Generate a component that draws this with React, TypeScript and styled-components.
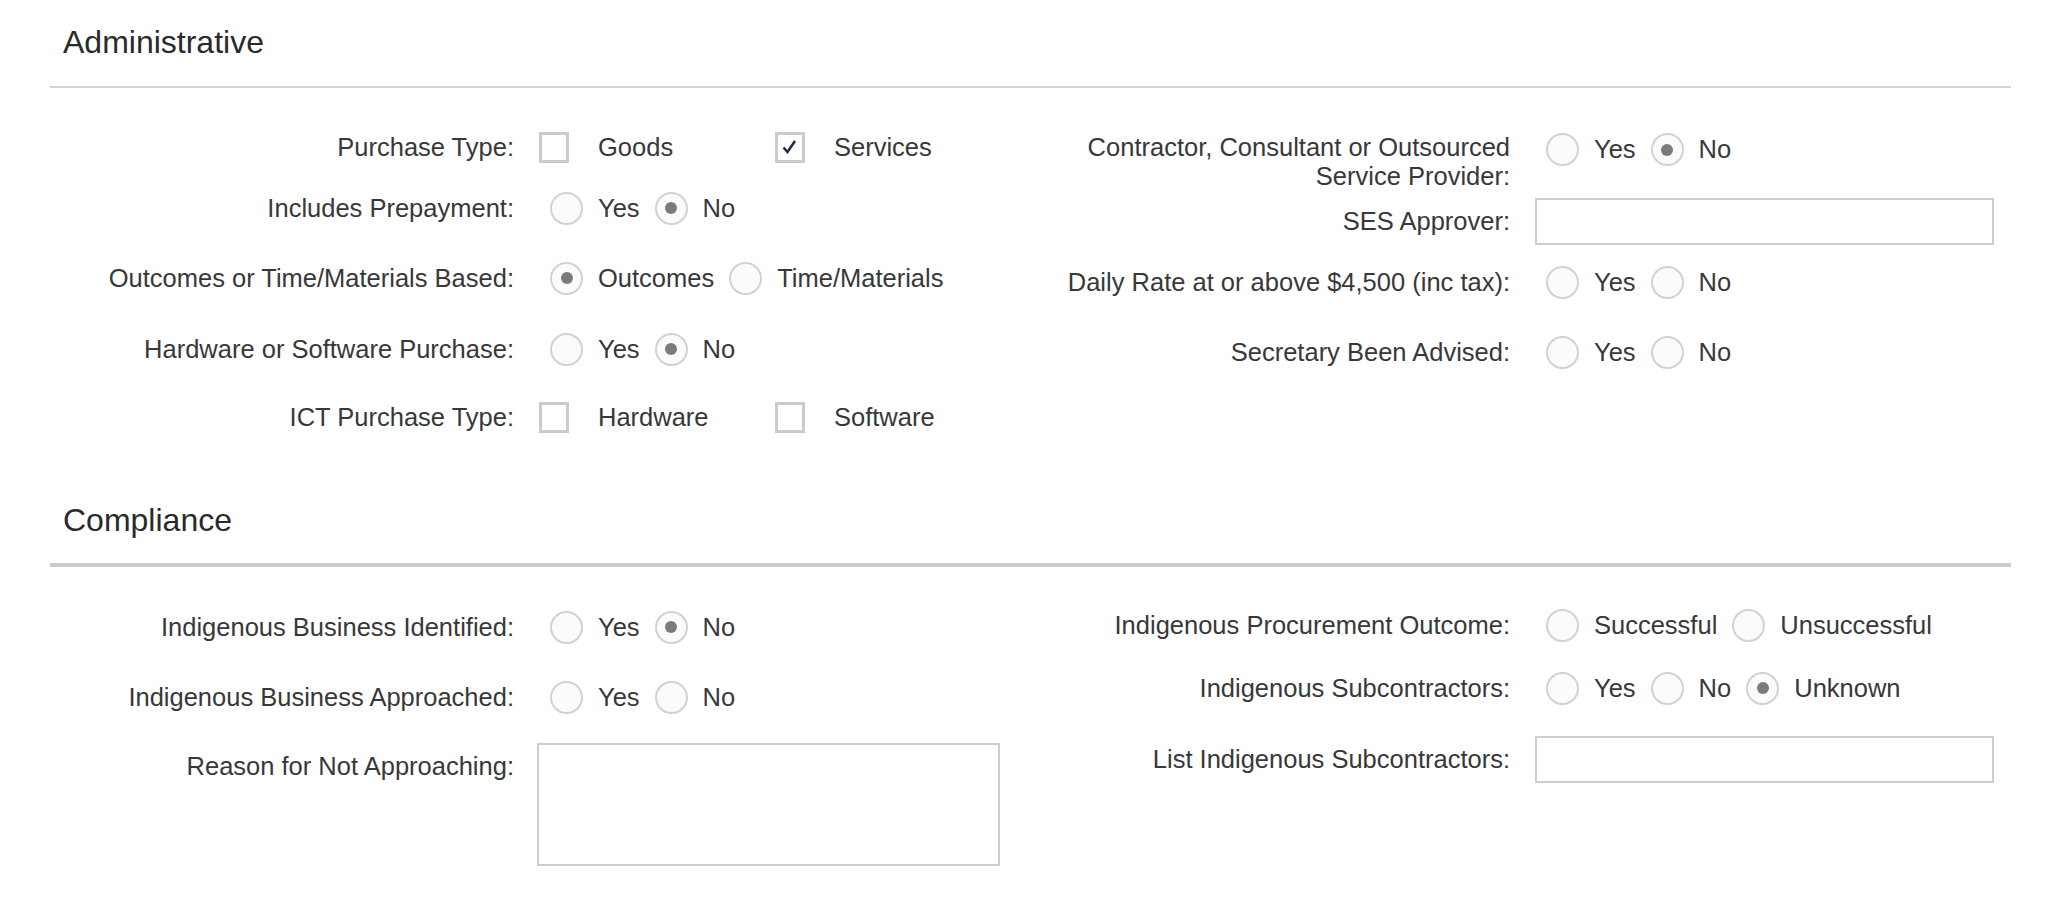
import * as React from 'react';
import styled, { createGlobalStyle } from 'styled-components';

const GlobalStyle = createGlobalStyle`
    html, body {
        margin: 0;
        padding: 0;
        background: #ffffff;
    }
    body {
        font-family: "Liberation Sans", Arial, Helvetica, sans-serif;
        color: #3a3a3a;
    }
`;

const Page = styled.div`
    padding: 22px 50px 0 50px;
`;

const Section = styled.section<{ $mt?: number }>`
    margin-top: ${p => p.$mt || 0}px;
`;

const SectionTitle = styled.h2`
    margin: 0;
    padding-left: 13px;
    font-size: 32px;
    line-height: 40px;
    font-weight: normal;
    color: #2a2a2a;
`;

const Divider = styled.div<{ $mt: number; $thick: number; $color: string }>`
    margin-top: ${p => p.$mt}px;
    height: ${p => p.$thick}px;
    background: ${p => p.$color};
`;

const Body = styled.div<{ $pt: number }>`
    display: flex;
    align-items: flex-start;
    padding-top: ${p => p.$pt}px;
`;

const Column = styled.div<{ $width?: number }>`
    display: flex;
    flex-direction: column;
    width: ${p => (p.$width ? p.$width + 'px' : 'auto')};
    flex: ${p => (p.$width ? 'none' : '1')};
`;

const Row = styled.div<{ $mt?: number; $top?: boolean }>`
    display: flex;
    align-items: ${p => (p.$top ? 'flex-start' : 'center')};
    min-height: 40px;
    margin-top: ${p => p.$mt || 0}px;
`;

const Label = styled.div<{ $width: number; $pt?: number }>`
    width: ${p => p.$width}px;
    flex: none;
    padding-top: ${p => p.$pt || 0}px;
    text-align: right;
    font-size: 25.5px;
    line-height: 29px;
    color: #383838;
    white-space: nowrap;
`;

const Controls = styled.div<{ $pt?: number }>`
    display: flex;
    align-items: center;
    margin-left: 25px;
    padding-top: ${p => p.$pt || 0}px;
    min-height: 29px;
`;

const RadioGroup = styled.div`
    display: flex;
    align-items: center;
    gap: 15px;
    padding-left: 11px;
`;

const RadioOption = styled.label`
    display: flex;
    align-items: center;
    gap: 15px;
`;

const RadioCircle = styled.span<{ $checked?: boolean }>`
    position: relative;
    box-sizing: border-box;
    width: 33px;
    height: 33px;
    border-radius: 50%;
    border: 2px solid #d2d2d2;
    background: #fbfbfb;

    &::after {
        content: '';
        display: ${p => (p.$checked ? 'block' : 'none')};
        position: absolute;
        left: 50%;
        top: 50%;
        width: 12px;
        height: 12px;
        margin: -6px 0 0 -6px;
        border-radius: 50%;
        background: #7b7b7b;
    }
`;

const OptionText = styled.span`
    font-size: 25.5px;
    line-height: 29px;
    color: #383838;
`;

const CheckOption = styled.label`
    display: flex;
    align-items: center;
    gap: 29px;
    width: 236px;
`;

const CheckBox = styled.span`
    box-sizing: border-box;
    display: flex;
    width: 30px;
    height: 31px;
    border: 3px solid #cbcbcb;
    background: #ffffff;
`;

const TextInput = styled.div`
    box-sizing: border-box;
    width: 459px;
    height: 47px;
    border: 2px solid #cdcdcd;
    background: #ffffff;
`;

const TextArea = styled.div`
    box-sizing: border-box;
    width: 463px;
    height: 123px;
    margin-left: -2px;
    border: 2px solid #cdcdcd;
    background: #ffffff;
`;

const Check = () => (
    <svg width="24" height="25" viewBox="0 0 24 25">
        <polyline points="5.5,12.5 9.5,17 17,6" fill="none" stroke="#1f2d4d" strokeWidth="2.6" />
    </svg>
);

type Opt = { text: string; checked?: boolean };

const Radios = ({ options }: { options: Opt[] }) => (
    <RadioGroup>
        {options.map(o => (
            <RadioOption key={o.text}>
                <RadioCircle $checked={o.checked} />
                <OptionText>{o.text}</OptionText>
            </RadioOption>
        ))}
    </RadioGroup>
);

const Checks = ({ options }: { options: Opt[] }) => (
    <>
        {options.map(o => (
            <CheckOption key={o.text}>
                <CheckBox>{o.checked && <Check />}</CheckBox>
                <OptionText>{o.text}</OptionText>
            </CheckOption>
        ))}
    </>
);

const yesNo = (v?: 'Yes' | 'No'): Opt[] => [
    { text: 'Yes', checked: v === 'Yes' },
    { text: 'No', checked: v === 'No' }
];

const LEFT = 464;
const RIGHT = 450;

const App = (): JSX.Element => {
    return (
        <Page>
            <GlobalStyle />
            <Section>
                <SectionTitle>Administrative</SectionTitle>
                <Divider $mt={24} $thick={2} $color="#d4d4d4" />
                <Body $pt={39}>
                    <Column $width={1010}>
                        <Row>
                            <Label $width={LEFT}>Purchase Type:</Label>
                            <Controls>
                                <Checks options={[{ text: 'Goods' }, { text: 'Services', checked: true }]} />
                            </Controls>
                        </Row>
                        <Row $mt={21}>
                            <Label $width={LEFT}>Includes Prepayment:</Label>
                            <Controls><Radios options={yesNo('No')} /></Controls>
                        </Row>
                        <Row $mt={30}>
                            <Label $width={LEFT}>Outcomes or Time/Materials Based:</Label>
                            <Controls>
                                <Radios options={[{ text: 'Outcomes', checked: true }, { text: 'Time/Materials' }]} />
                            </Controls>
                        </Row>
                        <Row $mt={31}>
                            <Label $width={LEFT}>Hardware or Software Purchase:</Label>
                            <Controls><Radios options={yesNo('No')} /></Controls>
                        </Row>
                        <Row $mt={28}>
                            <Label $width={LEFT}>ICT Purchase Type:</Label>
                            <Controls>
                                <Checks options={[{ text: 'Hardware' }, { text: 'Software' }]} />
                            </Controls>
                        </Row>
                    </Column>
                    <Column>
                        <Row $top>
                            <Label $width={RIGHT} $pt={6}>
                                Contractor, Consultant or Outsourced<br />Service Provider:
                            </Label>
                            <Controls $pt={6}><Radios options={yesNo('No')} /></Controls>
                        </Row>
                        <Row $mt={7}>
                            <Label $width={RIGHT}>SES Approver:</Label>
                            <Controls><TextInput /></Controls>
                        </Row>
                        <Row $mt={17}>
                            <Label $width={RIGHT}>Daily Rate at or above $4,500 (inc tax):</Label>
                            <Controls><Radios options={yesNo()} /></Controls>
                        </Row>
                        <Row $mt={30}>
                            <Label $width={RIGHT}>Secretary Been Advised:</Label>
                            <Controls><Radios options={yesNo()} /></Controls>
                        </Row>
                    </Column>
                </Body>
            </Section>

            <Section $mt={63}>
                <SectionTitle>Compliance</SectionTitle>
                <Divider $mt={23} $thick={4} $color="#cbcbcb" />
                <Body $pt={40}>
                    <Column $width={1010}>
                        <Row>
                            <Label $width={LEFT}>Indigenous Business Identified:</Label>
                            <Controls><Radios options={yesNo('No')} /></Controls>
                        </Row>
                        <Row $mt={30}>
                            <Label $width={LEFT}>Indigenous Business Approached:</Label>
                            <Controls><Radios options={yesNo()} /></Controls>
                        </Row>
                        <Row $mt={26} $top>
                            <Label $width={LEFT} $pt={9}>Reason for Not Approaching:</Label>
                            <Controls><TextArea /></Controls>
                        </Row>
                    </Column>
                    <Column>
                        <Row $mt={-2}>
                            <Label $width={RIGHT}>Indigenous Procurement Outcome:</Label>
                            <Controls>
                                <Radios options={[{ text: 'Successful' }, { text: 'Unsuccessful' }]} />
                            </Controls>
                        </Row>
                        <Row $mt={23}>
                            <Label $width={RIGHT}>Indigenous Subcontractors:</Label>
                            <Controls>
                                <Radios options={[{ text: 'Yes' }, { text: 'No' }, { text: 'Unknown', checked: true }]} />
                            </Controls>
                        </Row>
                        <Row $mt={28}>
                            <Label $width={RIGHT}>List Indigenous Subcontractors:</Label>
                            <Controls><TextInput /></Controls>
                        </Row>
                    </Column>
                </Body>
            </Section>
        </Page>
    );
};

export default App;
